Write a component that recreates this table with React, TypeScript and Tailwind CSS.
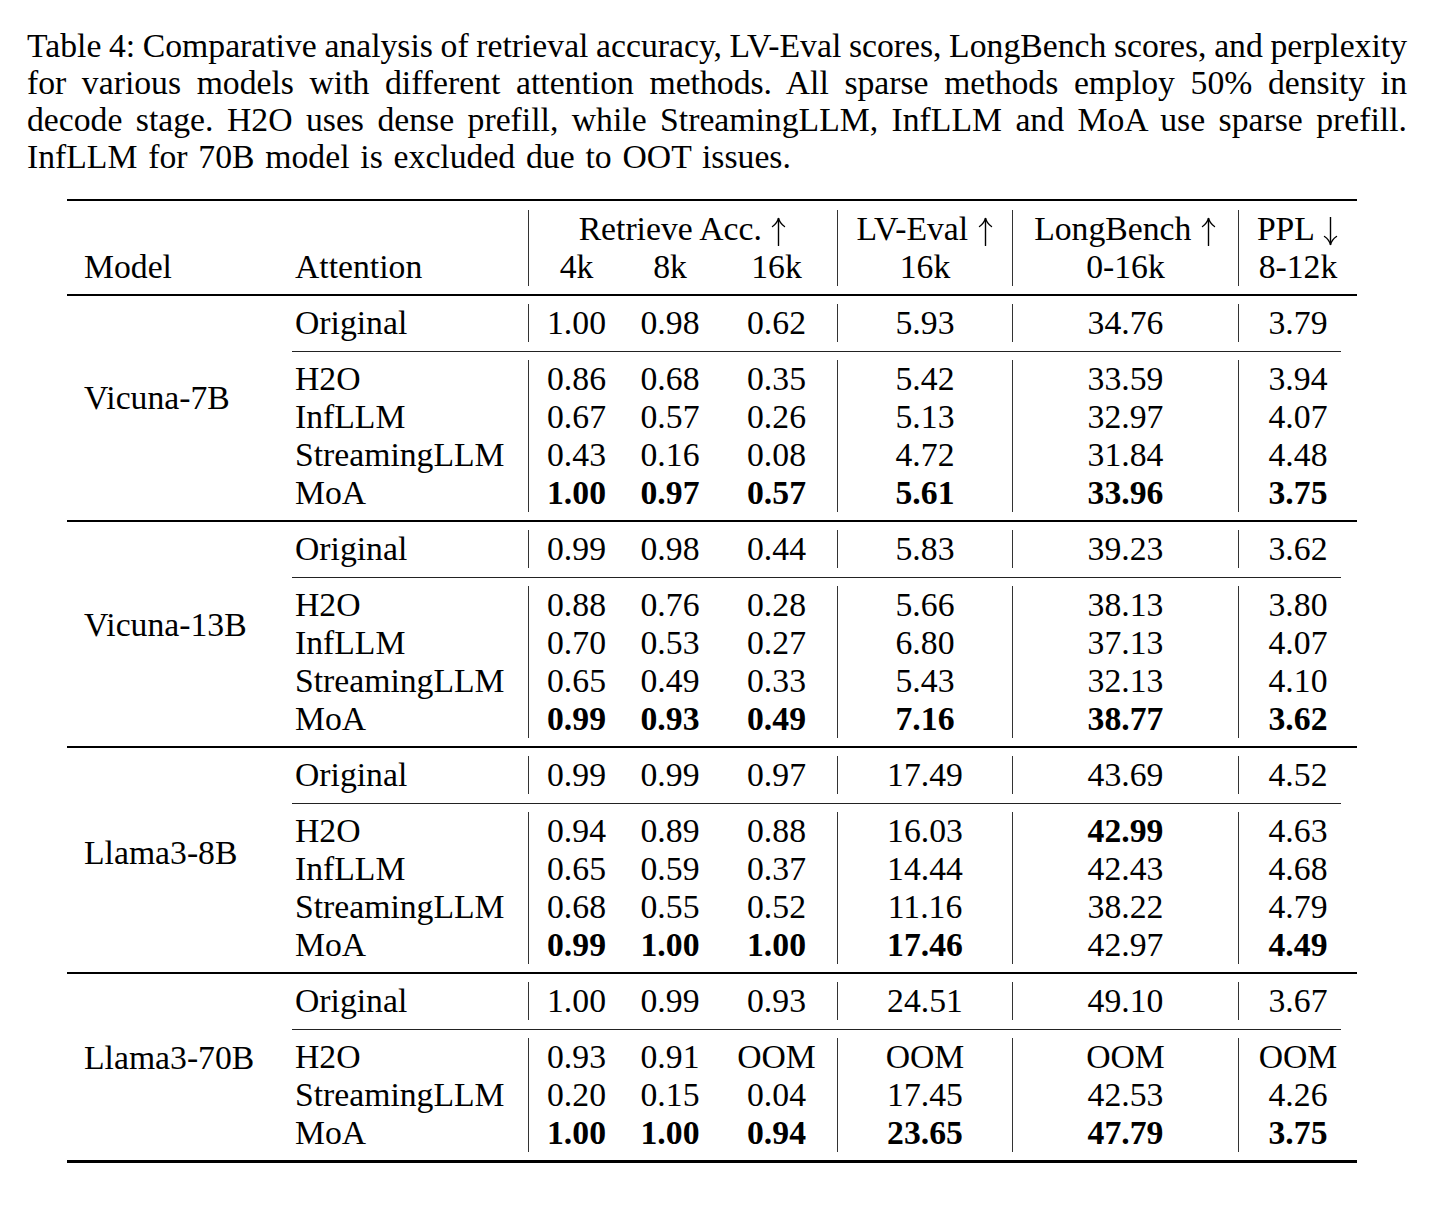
import React from "react";

type Row = { a: string; v: string[]; b: boolean[] };
type Group = { model: string; pt: string; rows: Row[] };

const all = [true, true, true, true, true, true];
const none = [false, false, false, false, false, false];

const groups: Group[] = [
  {
    model: "Vicuna-7B",
    pt: "pt-[83px]",
    rows: [
      { a: "Original", v: ["1.00", "0.98", "0.62", "5.93", "34.76", "3.79"], b: none },
      { a: "H2O", v: ["0.86", "0.68", "0.35", "5.42", "33.59", "3.94"], b: none },
      { a: "InfLLM", v: ["0.67", "0.57", "0.26", "5.13", "32.97", "4.07"], b: none },
      { a: "StreamingLLM", v: ["0.43", "0.16", "0.08", "4.72", "31.84", "4.48"], b: none },
      { a: "MoA", v: ["1.00", "0.97", "0.57", "5.61", "33.96", "3.75"], b: all },
    ],
  },
  {
    model: "Vicuna-13B",
    pt: "pt-[84px]",
    rows: [
      { a: "Original", v: ["0.99", "0.98", "0.44", "5.83", "39.23", "3.62"], b: none },
      { a: "H2O", v: ["0.88", "0.76", "0.28", "5.66", "38.13", "3.80"], b: none },
      { a: "InfLLM", v: ["0.70", "0.53", "0.27", "6.80", "37.13", "4.07"], b: none },
      { a: "StreamingLLM", v: ["0.65", "0.49", "0.33", "5.43", "32.13", "4.10"], b: none },
      { a: "MoA", v: ["0.99", "0.93", "0.49", "7.16", "38.77", "3.62"], b: all },
    ],
  },
  {
    model: "Llama3-8B",
    pt: "pt-[86px]",
    rows: [
      { a: "Original", v: ["0.99", "0.99", "0.97", "17.49", "43.69", "4.52"], b: none },
      { a: "H2O", v: ["0.94", "0.89", "0.88", "16.03", "42.99", "4.63"], b: [false, false, false, false, true, false] },
      { a: "InfLLM", v: ["0.65", "0.59", "0.37", "14.44", "42.43", "4.68"], b: none },
      { a: "StreamingLLM", v: ["0.68", "0.55", "0.52", "11.16", "38.22", "4.79"], b: none },
      { a: "MoA", v: ["0.99", "1.00", "1.00", "17.46", "42.97", "4.49"], b: [true, true, true, true, false, true] },
    ],
  },
  {
    model: "Llama3-70B",
    pt: "pt-[65px]",
    rows: [
      { a: "Original", v: ["1.00", "0.99", "0.93", "24.51", "49.10", "3.67"], b: none },
      { a: "H2O", v: ["0.93", "0.91", "OOM", "OOM", "OOM", "OOM"], b: none },
      { a: "StreamingLLM", v: ["0.20", "0.15", "0.04", "17.45", "42.53", "4.26"], b: none },
      { a: "MoA", v: ["1.00", "1.00", "0.94", "23.65", "47.79", "3.75"], b: all },
    ],
  },
];

const colCls = [
  "w-[96px] border-l border-[#333]",
  "w-[92px]",
  "w-[121px]",
  "w-[175px] border-l border-[#333]",
  "w-[226px] border-l border-[#333]",
  "w-[119px] border-l border-[#333]",
];

function Arrow({ down }: { down?: boolean }) {
  return (
    <svg
      viewBox="0 0 17 29"
      className={`inline-block w-[17px] h-[29px] align-[-6px] ${down ? "rotate-180" : ""}`}
      fill="none"
      stroke="#000"
      strokeWidth="1.4"
      strokeLinecap="round"
    >
      <path d="M8.5 1.5 L8.5 28.5" />
      <path d="M2.5 9.5 C5.5 7.5 7.6 4.8 8.5 1.2 C9.4 4.8 11.5 7.5 14.5 9.5" />
    </svg>
  );
}

function DataRow({ r }: { r: Row }) {
  return (
    <div className="flex h-[37.9px]">
      <div className="w-[252px] pl-[19px] flex items-center whitespace-nowrap">{r.a}</div>
      {r.v.map((x, i) => (
        <div
          key={i}
          className={`${colCls[i]} flex items-center justify-center whitespace-nowrap ${r.b[i] ? "font-bold" : ""}`}
        >
          {x}
        </div>
      ))}
    </div>
  );
}

function Spacer() {
  return <div className="h-[8.5px]" />;
}

function GroupBlock({ g }: { g: Group }) {
  const [first, ...rest] = g.rows;
  return (
    <div className="flex">
      <div className={`w-[209px] pl-[17px] ${g.pt} whitespace-nowrap`}>
        <div className="h-[37.9px] flex items-center">{g.model}</div>
      </div>
      <div className="flex flex-col">
        <Spacer />
        <DataRow r={first} />
        <Spacer />
        <div className="h-[1px] bg-[#222] ml-[16px] mr-[16px]" />
        <Spacer />
        {rest.map((r, i) => (
          <DataRow key={i} r={r} />
        ))}
        <Spacer />
      </div>
    </div>
  );
}

export default function App() {
  return (
    <div className="w-[1438px] h-[1208px] bg-white text-black [font-family:'Liberation_Serif','Times_New_Roman',serif] text-[33.7px] leading-[37.1px]">
      <div className="pt-[26.8px] pl-[27px] w-[1407px]">
        <div className="text-justify [text-align-last:justify] whitespace-nowrap [word-spacing:-1.2px]">
          Table 4: Comparative analysis of retrieval accuracy, LV-Eval scores, LongBench scores, and perplexity
        </div>
        <div className="text-justify [text-align-last:justify] whitespace-nowrap">
          for various models with different attention methods. All sparse methods employ 50% density in
        </div>
        <div className="text-justify [text-align-last:justify] whitespace-nowrap">
          decode stage. H2O uses dense prefill, while StreamingLLM, InfLLM and MoA use sparse prefill.
        </div>
        <div className="whitespace-nowrap [word-spacing:2.4px]">InfLLM for 70B model is excluded due to OOT issues.</div>
      </div>

      <div className="ml-[67px] w-[1290px] mt-[23.8px] leading-[37.9px]">
        <div className="h-[2.5px] bg-black" />
        <Spacer />
        <div className="flex h-[37.9px]">
          <div className="w-[209px]" />
          <div className="w-[252px]" />
          <div className="w-[309px] border-l border-[#333] flex items-center justify-center whitespace-nowrap">
            <span>
              Retrieve Acc. <Arrow />
            </span>
          </div>
          <div className={`${colCls[3]} flex items-center justify-center whitespace-nowrap`}>
            <span>
              LV-Eval <Arrow />
            </span>
          </div>
          <div className={`${colCls[4]} flex items-center justify-center whitespace-nowrap`}>
            <span>
              LongBench <Arrow />
            </span>
          </div>
          <div className={`${colCls[5]} flex items-center justify-center whitespace-nowrap`}>
            <span>
              PPL <Arrow down />
            </span>
          </div>
        </div>
        <div className="flex h-[37.9px]">
          <div className="w-[209px] pl-[17px] flex items-center">Model</div>
          <div className="w-[252px] pl-[19px] flex items-center">Attention</div>
          {["4k", "8k", "16k", "16k", "0-16k", "8-12k"].map((x, i) => (
            <div key={i} className={`${colCls[i]} flex items-center justify-center whitespace-nowrap`}>
              {x}
            </div>
          ))}
        </div>
        <Spacer />
        {groups.map((g, i) => (
          <div key={i}>
            <div className="h-[1.5px] bg-black" />
            <GroupBlock g={g} />
          </div>
        ))}
        <div className="h-[2.5px] bg-black" />
      </div>
    </div>
  );
}
